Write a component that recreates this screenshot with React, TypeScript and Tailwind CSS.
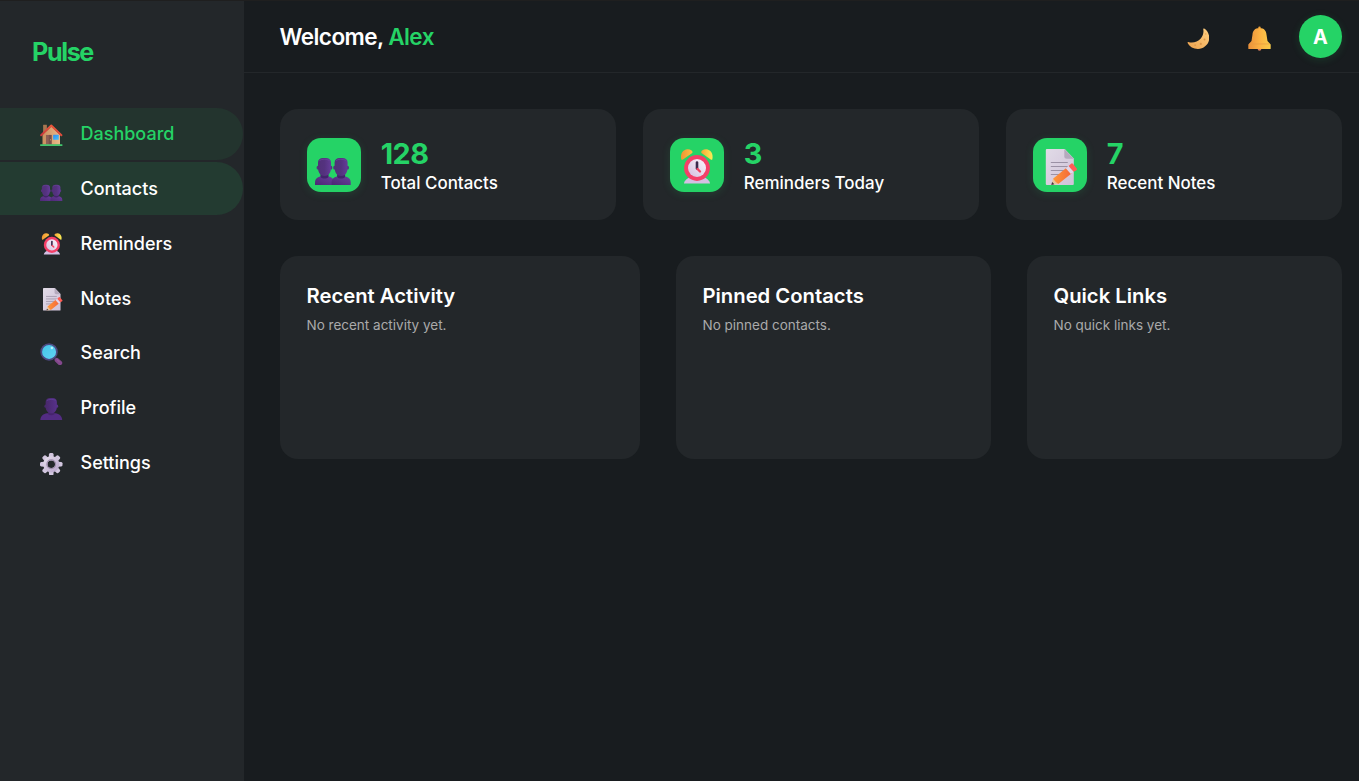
import React from "react";

type IconProps = { className?: string };

function House({ className }: IconProps) {
  return (
    <svg viewBox="0 0 36 36" className={className}>
      <defs>
        <linearGradient id="hw" x1="0" x2="1"><stop offset="0" stopColor="#c98f5e" /><stop offset="1" stopColor="#eab98a" /></linearGradient>
        <linearGradient id="hr" x1="0" x2="1" y1="1" y2="0"><stop offset="0" stopColor="#c9373c" /><stop offset="1" stopColor="#f4603a" /></linearGradient>
        <linearGradient id="hg" x1="0" x2="1" y1="0" y2="1"><stop offset="0" stopColor="#2f8df0" /><stop offset="1" stopColor="#45c0fb" /></linearGradient>
      </defs>
      <rect x="5" y="1" width="6" height="14" rx="0.6" fill="#a87650" />
      <path d="M4 17 18 4l14 13v16H4Z" fill="url(#hw)" />
      <path d="M9.500 17.500h9V33h-9Z" fill="#8d5f55" />
      <path d="M14 17.500h4.500V33H14Z" fill="#79504a" />
      <circle cx="16.700" cy="25" r="0.800" fill="#e9b56c" />
      <rect x="21" y="17" width="9" height="8" rx="0.800" fill="url(#hg)" />
      <path d="M1.800 18 18 2.500 34.200 18" fill="none" stroke="url(#hr)" strokeWidth="3.200" strokeLinecap="round" strokeLinejoin="round" />
      <rect x="0" y="32.500" width="36" height="2.500" rx="1" fill="#42c66d" />
    </svg>
  );
}

function People({ className }: IconProps) {
  return (
    <svg viewBox="0 0 36 36" className={className}>
      <defs>
        <linearGradient id="ph" x1="0" x2="1"><stop offset="0" stopColor="#513078" /><stop offset="0.500" stopColor="#54327f" /><stop offset="1" stopColor="#643c98" /></linearGradient>
        <linearGradient id="pb" x1="0" x2="1" y1="1" y2="0"><stop offset="0" stopColor="#4b2873" /><stop offset="1" stopColor="#6b3d9e" /></linearGradient>
      </defs>
      {[0, 16.600].map((x) => (
        <g key={x} transform={`translate(${x} 0)`}>
          <path d="M0 36v-2.600C0 29.700 2.500 27.700 6.500 27.200h6c4 .5 6.600 2.500 6.600 6.200V36Z" fill="url(#pb)" />
          <path d="M5.500 24h8v4c-2 2-6 2-8 0Z" fill="#42246b" />
          <ellipse cx="2.900" cy="18.700" rx="1.300" ry="1.900" fill="#55317f" />
          <ellipse cx="16" cy="18.700" rx="1.300" ry="1.900" fill="#55317f" />
          <path d="M3 13.500C3 10.500 5 9 8 9h3c3 0 5 1.500 5 4.500V19c0 5-3 8-6.500 8S3 24 3 19Z" fill="url(#ph)" />
          <path d="M4.500 11.500C6 10 12 9.600 14.500 11.500" fill="none" stroke="#6b449d" strokeWidth="0.800" />
        </g>
      ))}
    </svg>
  );
}

function Clock({ className }: IconProps) {
  return (
    <svg viewBox="0 0 36 36" className={className}>
      <defs>
        <linearGradient id="cb" x1="0" x2="1"><stop offset="0" stopColor="#f09532" /><stop offset="1" stopColor="#fdc044" /></linearGradient>
        <linearGradient id="cc" x1="0" x2="1"><stop offset="0" stopColor="#f5a536" /><stop offset="1" stopColor="#fbef55" /></linearGradient>
        <linearGradient id="cf" x1="1" x2="0" y1="0" y2="1"><stop offset="0" stopColor="#fbf4fc" /><stop offset="1" stopColor="#d3bede" /></linearGradient>
      </defs>
      <g transform="translate(1 0)">
        <path d="M5 34.500c0-3 4-5.500 6-6.500h14c2 1 6 3.500 6 6.500Z" fill="#d3bfe3" />
        <path d="M2.300 10.500C1 5 4 .5 8.500.3c3-.1 5 1.500 5 2.700Q13.500 4 12.500 4.500L4 10.500Q3 11.200 2.300 10.500Z" fill="url(#cb)" />
        <path d="M33.300 10.500C34.700 5 31.500.5 27.200.3c-3-.1-5 1.500-5 2.700q0 1 1 1.500l8.500 6Q32.600 11.200 33.300 10.500Z" fill="url(#cc)" />
        <circle cx="18" cy="19" r="12.900" fill="#f43f68" />
        <circle cx="18" cy="19" r="9" fill="url(#cf)" />
        <path d="M18 13.500v6" stroke="#3b284c" strokeWidth="2.600" strokeLinecap="round" />
        <path d="m18.500 20 2.500 2.500" stroke="#f43f5f" strokeWidth="2.300" strokeLinecap="round" />
      </g>
    </svg>
  );
}

function Memo({ className }: IconProps) {
  return (
    <svg viewBox="0 0 36 36" className={className}>
      <defs>
        <linearGradient id="mp" x1="0" x2="1" y1="0" y2="1"><stop offset="0" stopColor="#e1dbe7" /><stop offset="1" stopColor="#cfc1d8" /></linearGradient>
        <linearGradient id="mc" x1="0" x2="1"><stop offset="0" stopColor="#ff9838" /><stop offset="1" stopColor="#f4663b" /></linearGradient>
      </defs>
      <g transform="translate(1.800 0)">
        <path d="M4 0h18L31 9.500V35a1 1 0 0 1-1 1H4a1 1 0 0 1-1-1V1a1 1 0 0 1 1-1Z" fill="url(#mp)" />
        <path d="M21.500 0 31 9.800h-7a2.500 2.500 0 0 1-2.500-2.500Z" fill="#b4aabd" />
        <path d="M8.500 13.500h16M8.500 17.500h16M8.500 21.500h14M8.500 25.500h8" stroke="#9b91a5" strokeWidth="1.200" strokeLinecap="round" />
        <path d="m8.500 36 1.700-6.300 5.300 5.300Z" fill="#e9c49b" />
        <path d="m8.500 36 .8-3 2.300 2.200Z" fill="#453041" />
        <path d="M10.200 29.700 24 18.500l5 5.700L15.500 35Q13 33.500 10.200 29.700Z" fill="url(#mc)" />
        <path d="m23 19.300 2.800-2.200 5 5.700-2.800 2.200Z" fill="#e1d6ea" />
        <path d="m25.800 17.100 2.500-2.400q.9-.8 1.800.1l3.800 4.600q.8 1-.2 1.800l-2.900 1.600Z" fill="#ff5d55" />
      </g>
    </svg>
  );
}

function Magnifier({ className }: IconProps) {
  return (
    <svg viewBox="0 0 36 36" className={className}>
      <defs>
        <linearGradient id="sg" x1="0" x2="1" y1="0" y2="1"><stop offset="0" stopColor="#43c5e7" /><stop offset="1" stopColor="#62d2f5" /></linearGradient>
      </defs>
      <path d="m24 25 2.500 2" stroke="#4e406b" strokeWidth="4" />
      <path d="m27 27.500 5 4.500" stroke="#83478c" strokeWidth="7" strokeLinecap="round" />
      <path d="m27 26.500 4 3.500" stroke="#9c5da0" strokeWidth="1.500" strokeLinecap="round" />
      <circle cx="14.500" cy="14.200" r="12.600" fill="url(#sg)" stroke="#4d4982" strokeWidth="2.800" />
      <circle cx="19" cy="8" r="2" fill="#b5f1ff" />
    </svg>
  );
}

function Person({ className }: IconProps) {
  return (
    <svg viewBox="0 0 36 36" className={className}>
      <defs>
        <linearGradient id="sh" x1="0" x2="1"><stop offset="0" stopColor="#48286b" /><stop offset="1" stopColor="#57318a" /></linearGradient>
      </defs>
      <path d="M0.500 36c0-7 4.500-10.500 11-11.500h13c6.500 1 11 4.500 11 11.500Z" fill="#532c83" />
      <path d="M13 20h10v6c-3 2-7 2-10 0Z" fill="#45246c" />
      <ellipse cx="8.800" cy="13" rx="1.800" ry="2.600" fill="#48286b" />
      <ellipse cx="27.200" cy="13" rx="1.800" ry="2.600" fill="#57318a" />
      <path d="M9 6.500C9 2 12 0 16 0h4c4 0 7 2 7 6.500V14c0 6.500-4 10.500-9 10.500S9 20.500 9 14Z" fill="url(#sh)" />
      <path d="M11 4c2-2 12-2.500 14 0" fill="none" stroke="#60409a" strokeWidth="1.200" />
    </svg>
  );
}

function Gear({ className }: IconProps) {
  return (
    <svg viewBox="0 0 36 36" className={className}>
      <defs>
        <linearGradient id="gg" x1="0" x2="1" y1="0" y2="1"><stop offset="0" stopColor="#e2dae9" /><stop offset="1" stopColor="#bba8cd" /></linearGradient>
      </defs>
      <g fill="#d2c6df">
        {[0, 45, 90, 135, 180, 225, 270, 315].map((a) => (
          <path key={a} transform={`rotate(${a} 18 18)`} d="M14 8l.4-6Q14.800 0 16.500 0h3q1.700 0 2.100 2L22 8Z" />
        ))}
      </g>
      <circle cx="18" cy="18" r="9.500" fill="none" stroke="url(#gg)" strokeWidth="7" />
      <circle cx="18" cy="18" r="7" fill="none" stroke="#9e8cab" strokeWidth="1.800" />
    </svg>
  );
}

function Moon({ className }: IconProps) {
  return (
    <svg viewBox="0 0 36 36" className={className}>
      <defs>
        <linearGradient id="mo" x1="0" x2="1" y1="1" y2="0"><stop offset="0" stopColor="#eda24d" /><stop offset="1" stopColor="#ffd082" /></linearGradient>
      </defs>
      <path d="M27.500 2.500C33 6 36 12 35.500 19 35 28 27 35 17.500 35 10.500 35 4 31.500 1 25.500q-.6-1.700 1-1.500C9 26.500 17 24 22 18.500 26 14 27 8 26 3.500q-.2-1.600 1.500-1Z" fill="url(#mo)" />
      <g fill="#dc9649"><circle cx="28" cy="20" r="1.600" /><circle cx="22" cy="27" r="1.800" /><circle cx="13" cy="29" r="1.300" /><circle cx="30" cy="11" r="1" /></g>
    </svg>
  );
}

function Bell({ className }: IconProps) {
  return (
    <svg viewBox="0 0 36 38" className={className}>
      <defs>
        <linearGradient id="bl" x1="0" x2="1"><stop offset="0" stopColor="#e9903b" /><stop offset="0.550" stopColor="#fdb443" /><stop offset="1" stopColor="#f9cc4a" /></linearGradient>
      </defs>
      <circle cx="18" cy="35" r="3" fill="#d67c5c" />
      <circle cx="18" cy="2" r="1.900" fill="#f3a73e" />
      <path d="M18 2.500C10.500 2.500 7.500 7 7 13L5.500 23 0.500 28.500v6q0 .8.800.8h33.400q.8 0 .8-.8v-6L30.500 23 29 13C28.500 7 25.500 2.500 18 2.500Z" fill="url(#bl)" />
      <path d="M2.500 27.500h31" stroke="#e99c43" strokeWidth="1.200" />
    </svg>
  );
}

const nav = [
  { label: "Dashboard", Icon: House, row: "bg-[#23342e] text-[#25d366]" },
  { label: "Contacts", Icon: People, row: "bg-[#233b31] text-white" },
  { label: "Reminders", Icon: Clock, row: "text-white" },
  { label: "Notes", Icon: Memo, row: "text-white" },
  { label: "Search", Icon: Magnifier, row: "text-white" },
  { label: "Profile", Icon: Person, row: "text-white" },
  { label: "Settings", Icon: Gear, row: "text-white" },
];

const stats = [
  { value: "128", label: "Total Contacts", Icon: People },
  { value: "3", label: "Reminders Today", Icon: Clock },
  { value: "7", label: "Recent Notes", Icon: Memo },
];

const panels = [
  { title: "Recent Activity", note: "No recent activity yet." },
  { title: "Pinned Contacts", note: "No pinned contacts." },
  { title: "Quick Links", note: "No quick links yet." },
];

export default function App() {
  return (
    <div className="flex h-[781px] w-full overflow-hidden border-t border-[#1f1f1f] bg-[#181c1f] font-[Inter,sans-serif] text-white">
      <aside className="w-[244px] shrink-0 bg-[#23272a]">
        <div className="h-[106.500px] pt-[33px] pl-8 text-[25.200px] leading-9 font-bold tracking-[-1.400px] text-[#25d366]">Pulse</div>
        <nav className="flex flex-col gap-[2px]">
          {nav.map(({ label, Icon, row }) => (
            <a key={label} className={`mr-px flex h-[52.800px] items-center gap-[18px] rounded-r-[27px] pl-10 text-[18px] font-medium ${row}`}>
              <Icon className="mt-[2.200px] size-[22.500px] shrink-0" />
              <span className="-mt-[0.300px]">{label}</span>
            </a>
          ))}
        </nav>
      </aside>
      <div className="flex min-w-0 flex-1 flex-col">
        <header className="flex h-[72px] shrink-0 items-center justify-between border-b border-[#23272a] pr-[17px] pl-[35.500px]">
          <h1 className="pt-px text-[22.500px] font-semibold tracking-[-0.560px]">
            Welcome, <span className="text-[#25d366]">Alex</span>
          </h1>
          <div className="flex items-center">
            <Moon className="mt-1 mr-[39px] size-[22.500px]" />
            <Bell className="mt-[3px] mr-7 h-[25px] w-[23px]" />
            <div className="flex size-[43px] items-center justify-center rounded-full bg-[#25d366] pt-[2px] text-[19.800px] font-bold shadow-[0_2px_8px_rgba(37,211,102,0.15)]">A</div>
          </div>
        </header>
        <main className="pt-9 pr-[17px] pl-9">
          <section className="grid grid-cols-3 gap-[27px]">
            {stats.map(({ value, label, Icon }) => (
              <div key={label} className="flex h-[111px] items-center gap-[19.800px] rounded-[18px] bg-[#23272a] px-[27px]">
                <div className="flex size-[54px] shrink-0 items-center justify-center rounded-[14px] bg-[#25d366] pt-1 shadow-[0_2px_8px_rgba(37,211,102,0.15)]">
                  <Icon className="mr-[2px] size-9" />
                </div>
                <div className="pt-[5px]">
                  <div className="text-[28.800px] leading-[29px] font-bold tracking-[-0.600px] text-[#25d366]">{value}</div>
                  <div className="mt-[3px] text-[16.950px] leading-6 font-medium">{label}</div>
                </div>
              </div>
            ))}
          </section>
          <section className="mt-9 grid grid-cols-[360px_1fr_1fr] gap-9">
            {panels.map(({ title, note }) => (
              <div key={title} className="h-[203px] rounded-[18px] bg-[#23272a] px-[26.500px] pt-[27px]">
                <h2 className="text-[20.250px] leading-[26px] font-semibold">{title}</h2>
                <p className="mt-1.5 text-[13.500px] leading-5 text-[#aaaaaa]">{note}</p>
              </div>
            ))}
          </section>
        </main>
      </div>
    </div>
  );
}
